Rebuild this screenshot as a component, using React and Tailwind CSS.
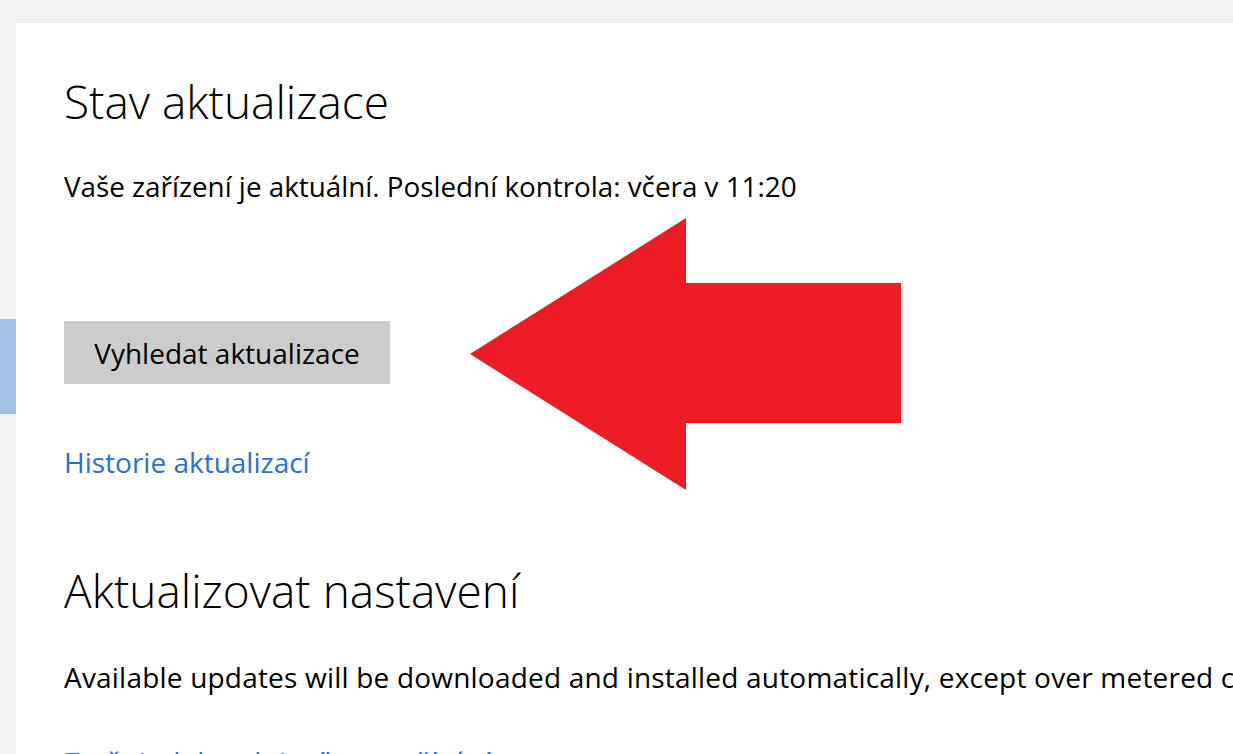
import React from "react";

export default function App() {
  const font = { fontFamily: '"Open Sans", "Noto Sans", sans-serif' };
  return (
    <div className="relative w-[1233px] h-[754px] overflow-hidden bg-[#f2f2f2]" style={font}>
      <div className="flex h-full pt-[23px]">
        <div className="w-[16px] shrink-0 flex flex-col">
          <div className="h-[296px]" />
          <div className="h-[95px] bg-[#a3bfe6]" />
        </div>
        <div className="flex-1 bg-white pl-[48px] overflow-hidden">
          <h1 className="mt-[50px] text-[46px] leading-[56px] font-light text-black whitespace-nowrap">Stav aktualizace</h1>
          <p className="mt-[39px] text-[27.8px] leading-[36px] text-black whitespace-nowrap">
            Vaše zařízení je aktuální. Poslední kontrola: včera v 11:20
          </p>
          <button className="mt-[117px] h-[63px] w-[326px] bg-[#cccccc] text-[28px] text-black whitespace-nowrap flex items-center justify-center">
            Vyhledat aktualizace
          </button>
          <a className="block mt-[60px] text-[28px] leading-[36px] text-[#2b6fd1] whitespace-nowrap">Historie aktualizací</a>
          <h2 className="mt-[82px] text-[46px] leading-[56px] font-light text-black whitespace-nowrap">Aktualizovat nastavení</h2>
          <p className="mt-[41px] text-[28px] leading-[36px] tracking-[0.2px] text-black whitespace-nowrap">
            Available updates will be downloaded and installed automatically, except over metered c
          </p>
          <a className="block mt-[49px] text-[28px] leading-[36px] text-[#2b6fd1] whitespace-nowrap">Změnit dobu aktivního používání</a>
        </div>
      </div>
      <svg className="absolute left-0 top-0" width="1233" height="754" viewBox="0 0 1233 754">
        <polygon points="470,354 686,218 686,283 901,283 901,423 686,423 686,490" fill="#ed1c24" />
      </svg>
    </div>
  );
}
